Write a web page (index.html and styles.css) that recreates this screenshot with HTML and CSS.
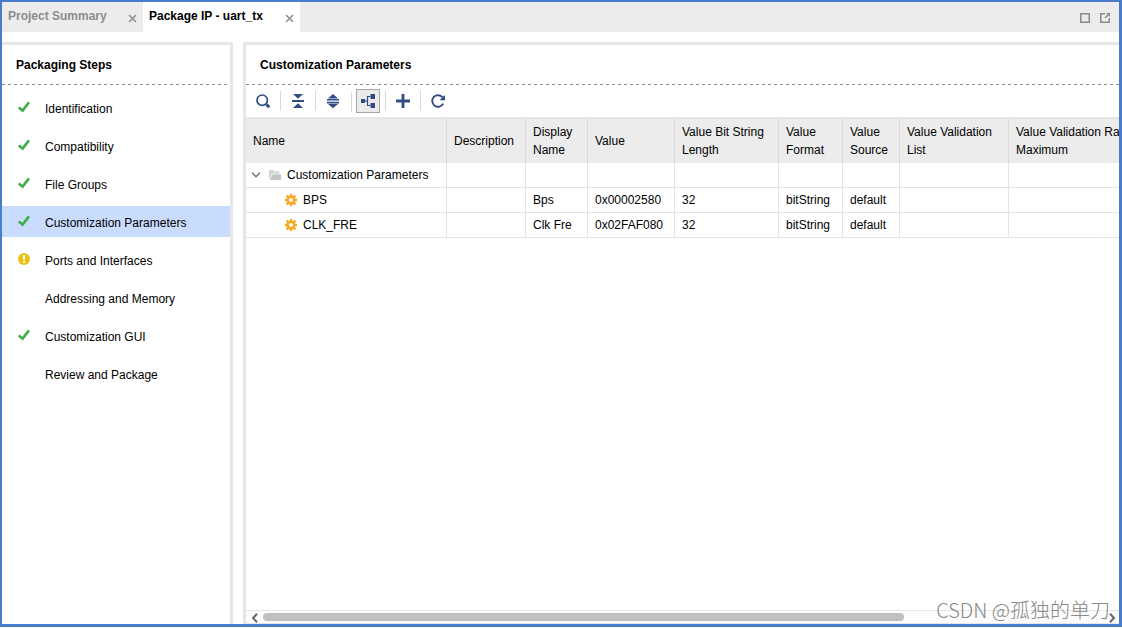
FILE: index.html
```html
<!DOCTYPE html>
<html lang="en">
<head>
    <meta charset="UTF-8">
    <meta name="viewport" content="width=device-width, initial-scale=1.0">
    <title>Package IP - uart_tx</title>
    <link rel="stylesheet" href="styles.css">
</head>
<body>
    <!-- shared icons -->
    <svg class="defs" width="0" height="0">
        <symbol id="close" viewBox="0 0 9 9">
            <path d="M1 1 L8 8 M8 1 L1 8" fill="none" stroke="#8c8c8c" stroke-width="1.5"/>
        </symbol>
        <symbol id="check" viewBox="0 0 12 12">
            <path d="M0.8 6.4 L4.6 9.6 L11 1.4" fill="none" stroke="#3fae49" stroke-width="2.6"/>
        </symbol>
        <symbol id="gear" viewBox="0 0 12 12">
            <circle cx="6" cy="6" r="3.3" fill="none" stroke="#f9a71f" stroke-width="2.4"/>
            <path d="M6 0 V2.5 M6 9.5 V12 M0 6 H2.5 M9.5 6 H12 M1.7 1.7 L3.4 3.4 M8.6 8.6 L10.3 10.3 M10.3 1.7 L8.6 3.4 M3.4 8.6 L1.7 10.3" stroke="#f9a71f" stroke-width="2.4"/>
        </symbol>
    </svg>

    <div class="window">
        <header class="tabs">
            <div class="tab">
                <a href="#">Project Summary</a>
                <button type="button" aria-label="Close Project Summary"><svg width="9" height="9"><use href="#close"/></svg></button>
            </div>
            <div class="tab active">
                <a href="#">Package IP - uart_tx</a>
                <button type="button" aria-label="Close Package IP"><svg width="9" height="9"><use href="#close"/></svg></button>
            </div>
            <div class="window-actions">
                <button type="button" aria-label="Maximize">
                    <svg width="10" height="10" viewBox="0 0 10 10"><rect x="0.75" y="0.75" width="8.5" height="8.5" fill="none" stroke="#8a8a8a" stroke-width="1.5"/></svg>
                </button>
                <button type="button" aria-label="Float">
                    <svg width="10" height="10" viewBox="0 0 10 10"><path d="M5 0.75 H0.75 V9.25 H9.25 V5" fill="none" stroke="#8a8a8a" stroke-width="1.5"/><path d="M6 0 H10 V4 Z" fill="#8a8a8a"/><path d="M5 5 L8.5 1.5" stroke="#8a8a8a" stroke-width="1.5"/></svg>
                </button>
            </div>
        </header>

        <div class="panels">
            <nav class="steps">
                <h2>Packaging Steps</h2>
                <ul>
                    <li><svg width="12" height="12"><use href="#check"/></svg><a href="#">Identification</a></li>
                    <li><svg width="12" height="12"><use href="#check"/></svg><a href="#">Compatibility</a></li>
                    <li><svg width="12" height="12"><use href="#check"/></svg><a href="#">File Groups</a></li>
                    <li class="selected"><svg width="12" height="12"><use href="#check"/></svg><a href="#">Customization Parameters</a></li>
                    <li>
                        <svg width="12" height="12" viewBox="0 0 12 12"><circle cx="6" cy="6" r="6" fill="#e8c31a"/><path d="M6 2 V7 M6 8 V10" stroke="#fff" stroke-width="1.6"/></svg>
                        <a href="#">Ports and Interfaces</a>
                    </li>
                    <li><a href="#">Addressing and Memory</a></li>
                    <li><svg width="12" height="12"><use href="#check"/></svg><a href="#">Customization GUI</a></li>
                    <li><a href="#">Review and Package</a></li>
                </ul>
            </nav>

            <main class="content">
                <h2>Customization Parameters</h2>
                <div class="toolbar">
                    <button type="button" aria-label="Search">
                        <svg width="16" height="16" viewBox="0 0 16 16"><circle cx="7.2" cy="7.2" r="5.2" fill="none" stroke="#2f4c85" stroke-width="1.7"/><path d="M11.5 11.5 L14.3 14.3" stroke="#2f4c85" stroke-width="3"/></svg>
                    </button>
                    <button type="button" aria-label="Collapse All">
                        <svg width="16" height="16" viewBox="0 0 16 16"><path d="M3 1 H13 L8 5.7 Z M2 7 H14 V9 H2 Z M8 10.3 L13 15 H3 Z" fill="#2f4c85"/></svg>
                    </button>
                    <button type="button" aria-label="Expand All">
                        <svg width="16" height="16" viewBox="0 0 16 16"><path d="M8 1 L13 5.5 H3 Z M2 6 H14 V7.6 H2 Z M2 8.8 H14 V10.4 H2 Z M3 11 H13 L8 15.3 Z" fill="#2f4c85"/></svg>
                    </button>
                    <button type="button" class="pressed" aria-label="Group by Category" aria-pressed="true">
                        <svg width="16" height="16" viewBox="0 0 16 16"><path d="M1 6 H5 V10 H1 Z M10.5 1 H15 V6 H10.5 Z M10.5 10 H15 V15 H10.5 Z" fill="#2f4c85"/><path d="M5 8 H7.5 M10.5 3.5 H7.5 V12.5 H10.5" fill="none" stroke="#2f4c85" stroke-width="1.2"/></svg>
                    </button>
                    <button type="button" aria-label="Add">
                        <svg width="16" height="16" viewBox="0 0 16 16"><path d="M8 1 V15 M1 8 H15" stroke="#2f4c85" stroke-width="2.8"/></svg>
                    </button>
                    <button type="button" aria-label="Refresh">
                        <svg width="16" height="16" viewBox="0 0 16 16"><path d="M12.6 4.4 A5.8 5.8 0 1 0 13.2 10.6" fill="none" stroke="#2f4c85" stroke-width="1.9"/><path d="M15 2 V7.2 H9.5 Z" fill="#2f4c85"/></svg>
                    </button>
                </div>

                <div class="table-wrap">
                    <table>
                        <colgroup>
                            <col class="col-name">
                            <col class="col-description">
                            <col class="col-display">
                            <col class="col-value">
                            <col class="col-length">
                            <col class="col-format">
                            <col class="col-source">
                            <col class="col-list">
                            <col class="col-max">
                        </colgroup>
                        <thead>
                            <tr>
                                <th>Name</th>
                                <th>Description</th>
                                <th>Display<br>Name</th>
                                <th>Value</th>
                                <th>Value Bit String<br>Length</th>
                                <th>Value<br>Format</th>
                                <th>Value<br>Source</th>
                                <th>Value Validation<br>List</th>
                                <th>Value Validation Range<br>Maximum</th>
                            </tr>
                        </thead>
                        <tbody>
                            <tr>
                                <td>
                                    <div class="group">
                                        <svg width="10" height="6" viewBox="0 0 10 6"><path d="M1 0.8 L5 4.8 L9 0.8" fill="none" stroke="#6e6e6e" stroke-width="1.4"/></svg>
                                        <svg width="12" height="10" viewBox="0 0 12 10"><path d="M0 10 V0 H4.5 L5.5 1.5 H10.5 V3.5 H3 L1 8.5 Z" fill="#d2d2d2"/><path d="M3.5 4.3 H12 V10 H1 Z" fill="#c4c4c4"/></svg>
                                        <span>Customization Parameters</span>
                                    </div>
                                </td>
                                <td></td><td></td><td></td><td></td><td></td><td></td><td></td><td></td>
                            </tr>
                            <tr>
                                <td><div class="param"><svg width="12" height="12"><use href="#gear"/></svg><span>BPS</span></div></td>
                                <td></td>
                                <td>Bps</td>
                                <td>0x00002580</td>
                                <td>32</td>
                                <td>bitString</td>
                                <td>default</td>
                                <td></td>
                                <td></td>
                            </tr>
                            <tr>
                                <td><div class="param"><svg width="12" height="12"><use href="#gear"/></svg><span>CLK_FRE</span></div></td>
                                <td></td>
                                <td>Clk Fre</td>
                                <td>0x02FAF080</td>
                                <td>32</td>
                                <td>bitString</td>
                                <td>default</td>
                                <td></td>
                                <td></td>
                            </tr>
                        </tbody>
                    </table>
                </div>

                <div class="scrollbar">
                    <button type="button" aria-label="Scroll left"><svg width="7" height="10" viewBox="0 0 7 10"><path d="M6 0.8 L2 5 L6 9.2" fill="none" stroke="#666" stroke-width="2"/></svg></button>
                    <div class="track"><div class="thumb"></div></div>
                    <button type="button" aria-label="Scroll right"><svg width="7" height="10" viewBox="0 0 7 10"><path d="M1 0.8 L5 5 L1 9.2" fill="none" stroke="#666" stroke-width="2"/></svg></button>
                </div>
            </main>
        </div>
        <div class="watermark">CSDN @孤独的单刀</div>
    </div>
</body>
</html>
```

FILE: styles.css
```css
* {
    box-sizing: border-box;
}
body {
    margin: 0;
    height: 100vh;
    padding-bottom: 2px;
    background: #fff;
    color: #000;
    font-family: "Liberation Sans", Arial, sans-serif;
    font-size: 12px;
    line-height: 18px;
    overflow: hidden;
}
.defs {
    position: absolute;
}
svg {
    display: block;
    flex: none;
}
a {
    color: inherit;
    text-decoration: none;
}
button {
    display: flex;
    align-items: center;
    justify-content: center;
    padding: 0;
    border: 0;
    background: none;
    cursor: pointer;
}
.window {
    position: relative;
    display: flex;
    flex-direction: column;
    height: 100%;
    border: 2px solid #4a7ccc;
    border-right-width: 3px;
    border-bottom-width: 3px;
}

/* tabs */
.tabs {
    display: flex;
    height: 30px;
    background: #ececec;
}
.tab {
    display: flex;
    justify-content: space-between;
    width: 141px;
    padding: 5px 6px;
    color: #8c8c8c;
    font-weight: bold;
}
.tab.active {
    width: 157px;
    background: #fff;
    color: #000;
}
.tab button {
    height: 22px;
}
.window-actions {
    display: flex;
    gap: 10px;
    margin-left: auto;
    padding: 1px 9px 0 0;
}

/* panels */
.panels {
    display: flex;
    flex: 1;
    gap: 10px;
    min-height: 0;
    padding-top: 10px;
}
h2 {
    height: 40px;
    margin: 0;
    padding: 11px 14px;
    background: repeating-linear-gradient(90deg, #8f8f8f 0 3px, transparent 3px 6px) bottom / 100% 1px no-repeat;
    font-size: 12px;
    line-height: 18px;
}
.steps {
    width: 231px;
    border-top: 3px solid #e6e6e6;
    border-right: 3px solid #e6e6e6;
}
.steps ul {
    display: flex;
    flex-direction: column;
    gap: 7px;
    margin: 0;
    padding: 7px 0;
    list-style: none;
}
.steps li {
    display: grid;
    grid-template-columns: 27px 1fr;
    height: 31px;
    padding: 8px 0 0 16px;
}
.steps a {
    grid-column: 2;
    grid-row: 1;
}
.steps li svg {
    margin-top: 1px;
}
.steps li.selected {
    background: #c9dcfe;
}
.content {
    display: flex;
    flex: 1;
    flex-direction: column;
    min-width: 0;
    border-top: 3px solid #e6e6e6;
    border-left: 3px solid #e6e6e6;
}
.toolbar {
    display: flex;
    align-items: center;
    gap: 11px;
    height: 32px;
    padding-left: 5px;
}
.toolbar button {
    position: relative;
    width: 24px;
    height: 24px;
}
.toolbar button + button::before {
    content: "";
    position: absolute;
    left: -6px;
    top: 2px;
    width: 1px;
    height: 20px;
    background: #d9d9d9;
}
.toolbar .pressed {
    border: 1px solid #a6a6a6;
    background: #ebebeb;
}

/* parameter table */
.table-wrap {
    flex: 1;
    min-height: 0;
    overflow: hidden;
    border-top: 2px solid #e6e6e6;
}
table {
    width: 903px;
    border-collapse: separate;
    border-spacing: 0;
    table-layout: fixed;
}
.col-name { width: 201px; }
.col-description { width: 79px; }
.col-display { width: 62px; }
.col-value { width: 87px; }
.col-length { width: 104px; }
.col-format { width: 64px; }
.col-source { width: 57px; }
.col-list { width: 109px; }
.col-max { width: 140px; }
th {
    height: 44px;
    padding: 0 0 1px 7px;
    border-right: 1px solid #d9d9d9;
    background: #ececec;
    font-weight: normal;
    text-align: left;
    white-space: nowrap;
}
td {
    height: 25px;
    padding: 0 0 0 7px;
    border-right: 1px solid #e3e3e3;
    border-bottom: 1px solid #e3e3e3;
    white-space: nowrap;
}
.group,
.param {
    display: flex;
    align-items: center;
    gap: 6px;
}
.group svg:first-child {
    margin: 0 2px 0 -2px;
}
.param {
    padding-left: 32px;
}

/* scrollbar */
.scrollbar {
    display: flex;
    align-items: center;
    height: 14px;
    border-top: 1px solid #e6e6e6;
    border-bottom: 1px solid #e6e6e6;
    background: #fcfcfc;
}
.scrollbar button {
    width: 17px;
    padding-top: 2px;
}
.scrollbar button:last-child {
    width: 13px;
}
.track {
    flex: 1;
}
.thumb {
    width: 76%;
    height: 8px;
    border-radius: 4px;
    background: #c0c0c0;
}

.watermark {
    position: absolute;
    right: 9px;
    bottom: 0;
    color: #888;
    font-family: "Noto Sans CJK SC", sans-serif;
    font-size: 20px;
    font-weight: 300;
    line-height: 28px;
}
```
